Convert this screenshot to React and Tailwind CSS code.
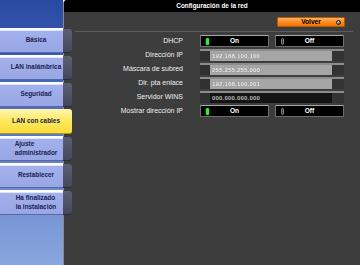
const NAV = [
  { label: "Básica" },
  { label: "LAN inalámbrica" },
  { label: "Seguridad" },
  { label: "LAN con cables", active: true },
  { label: ["Ajuste", "administrador"] },
  { label: "Restablecer" },
  { label: ["Ha finalizado", "la instalación"] },
];

function NavLabel({ label }) {
  if (Array.isArray(label)) {
    return (
      <span className="inline-block text-left leading-[9px]">
        {label[0]}
        <br />
        {label[1]}
      </span>
    );
  }
  return <span>{label}</span>;
}

function NavButton({ item }) {
  if (item.active) {
    return (
      <div className="relative z-10 flex h-[25px] w-[72px] items-center justify-center rounded-r-[3px] border-b border-[#b39a20] bg-gradient-to-b from-[#fff6b0] via-[#fde95a] to-[#f7dc3c] text-[6.4px] font-bold text-[#1b2250]">
        <NavLabel label={item.label} />
      </div>
    );
  }
  return (
    <div className="relative z-10 flex h-[25px] w-[72px]">
      <div className="flex w-[63px] items-center justify-center border-b border-[#5a66a8] bg-gradient-to-b from-[#a4b2ee] to-[#98a6e4] pl-[9px] text-[6.4px] font-bold text-[#1b2250] shadow-[inset_0_2px_0_#ffffff,inset_0_3px_0_#dfe5ff]">
        <NavLabel label={item.label} />
      </div>
      <div className="mt-[1px] w-[9px] rounded-r-[3px] border-b border-[#2a2b36] bg-gradient-to-b from-[#5d6073] to-[#45475a]" />
    </div>
  );
}

function Toggle({ label, on }) {
  return (
    <div className="relative flex h-[12px] w-[69px] items-center justify-center rounded-[1px] border border-[#6e6e6e] border-t-[#a8a8a8] bg-black text-[6.6px] font-bold text-white">
      <span
        className={
          on
            ? "absolute left-[5px] top-[2px] h-[7px] w-[3px] rounded-full bg-[#42e042] shadow-[0_0_2px_#2fff2f]"
            : "absolute left-[5px] top-[2px] h-[7px] w-[3px] rounded-full border border-[#8a8a8a] bg-[#333]"
        }
      />
      {label}
    </div>
  );
}

function Field({ value, dark }) {
  return (
    <div className="flex h-[12px] w-[144px] border-t-2 border-[#8c8c8c] bg-[#2e2e2e]">
      <div className="w-[10px] bg-[#303030]" />
      <div
        className={
          dark
            ? "flex w-[122px] items-center bg-[#141414] pl-[2px] text-[6px] font-bold tracking-[0.2px] text-[#b8b8b8]"
            : "flex w-[122px] items-center bg-[#a6a6a6] pl-[2px] text-[6px] font-bold tracking-[0.2px] text-[#f6f6f6] [text-shadow:0_0_1px_#555]"
        }
      >
        {value}
      </div>
      <div className="flex-1 bg-[#333333]" />
    </div>
  );
}

const ROWS = [
  { label: "DHCP", type: "toggle" },
  { label: "Dirección IP", value: "192.168.100.100" },
  { label: "Máscara de subred", value: "255.255.255.000" },
  { label: "Dir. pta enlace", value: "192.168.100.001" },
  { label: "Servidor WINS", value: "000.000.000.000", dark: true },
  { label: "Mostrar dirección IP", type: "toggle" },
];

export default function App() {
  return (
    <div
      className="flex h-[265px] w-[360px] overflow-hidden"
      style={{ fontFamily: "'Liberation Sans', Arial, sans-serif" }}
    >
      <aside className="flex w-[63px] shrink-0 flex-col gap-[2px] bg-gradient-to-b from-[#2a49a2] via-[#5877c4] to-[#8aa7de] pt-[28px]">
        {NAV.map((item, i) => (
          <NavButton key={i} item={item} />
        ))}
      </aside>

      <main className="flex flex-1 flex-col overflow-hidden rounded-tl-[4px] border-l border-[#8a8a8a] bg-[#3d3d3d]">
        <div className="flex h-[12px] items-center justify-center bg-black text-[6.4px] font-bold text-white">
          Configuración de la red
        </div>

        <div className="flex justify-end pr-[15px] pt-[5px]">
          <div className="flex h-[10px] w-[68px] items-center rounded-[1px] border border-[#b35a00] bg-gradient-to-b from-[#ffb060] via-[#ff8a1c] to-[#f07400] text-[6.6px] font-bold text-black">
            <span className="flex-1 pl-[8px] text-center">Volver</span>
            <span className="mr-[3px] h-[5px] w-[5px] rounded-full border border-[#222] bg-[#666] shadow-[inset_1px_1px_0_#ddd]" />
          </div>
        </div>

        <div className="ml-[11px] mr-[7px] mt-[4px] h-px bg-[#5c5c5c]" />

        <div className="mt-[3px] flex flex-col gap-[2px]">
          {ROWS.map((row) => (
            <div key={row.label} className="flex h-[12px] items-center">
              <div className="w-[120px] pr-px text-right text-[7px] text-[#f0f0f0]">
                {row.label}
              </div>
              <div className="ml-[16px] flex gap-[6px]">
                {row.type === "toggle" ? (
                  <>
                    <Toggle label="On" on />
                    <Toggle label="Off" />
                  </>
                ) : (
                  <Field value={row.value} dark={row.dark} />
                )}
              </div>
            </div>
          ))}
        </div>
      </main>
    </div>
  );
}
